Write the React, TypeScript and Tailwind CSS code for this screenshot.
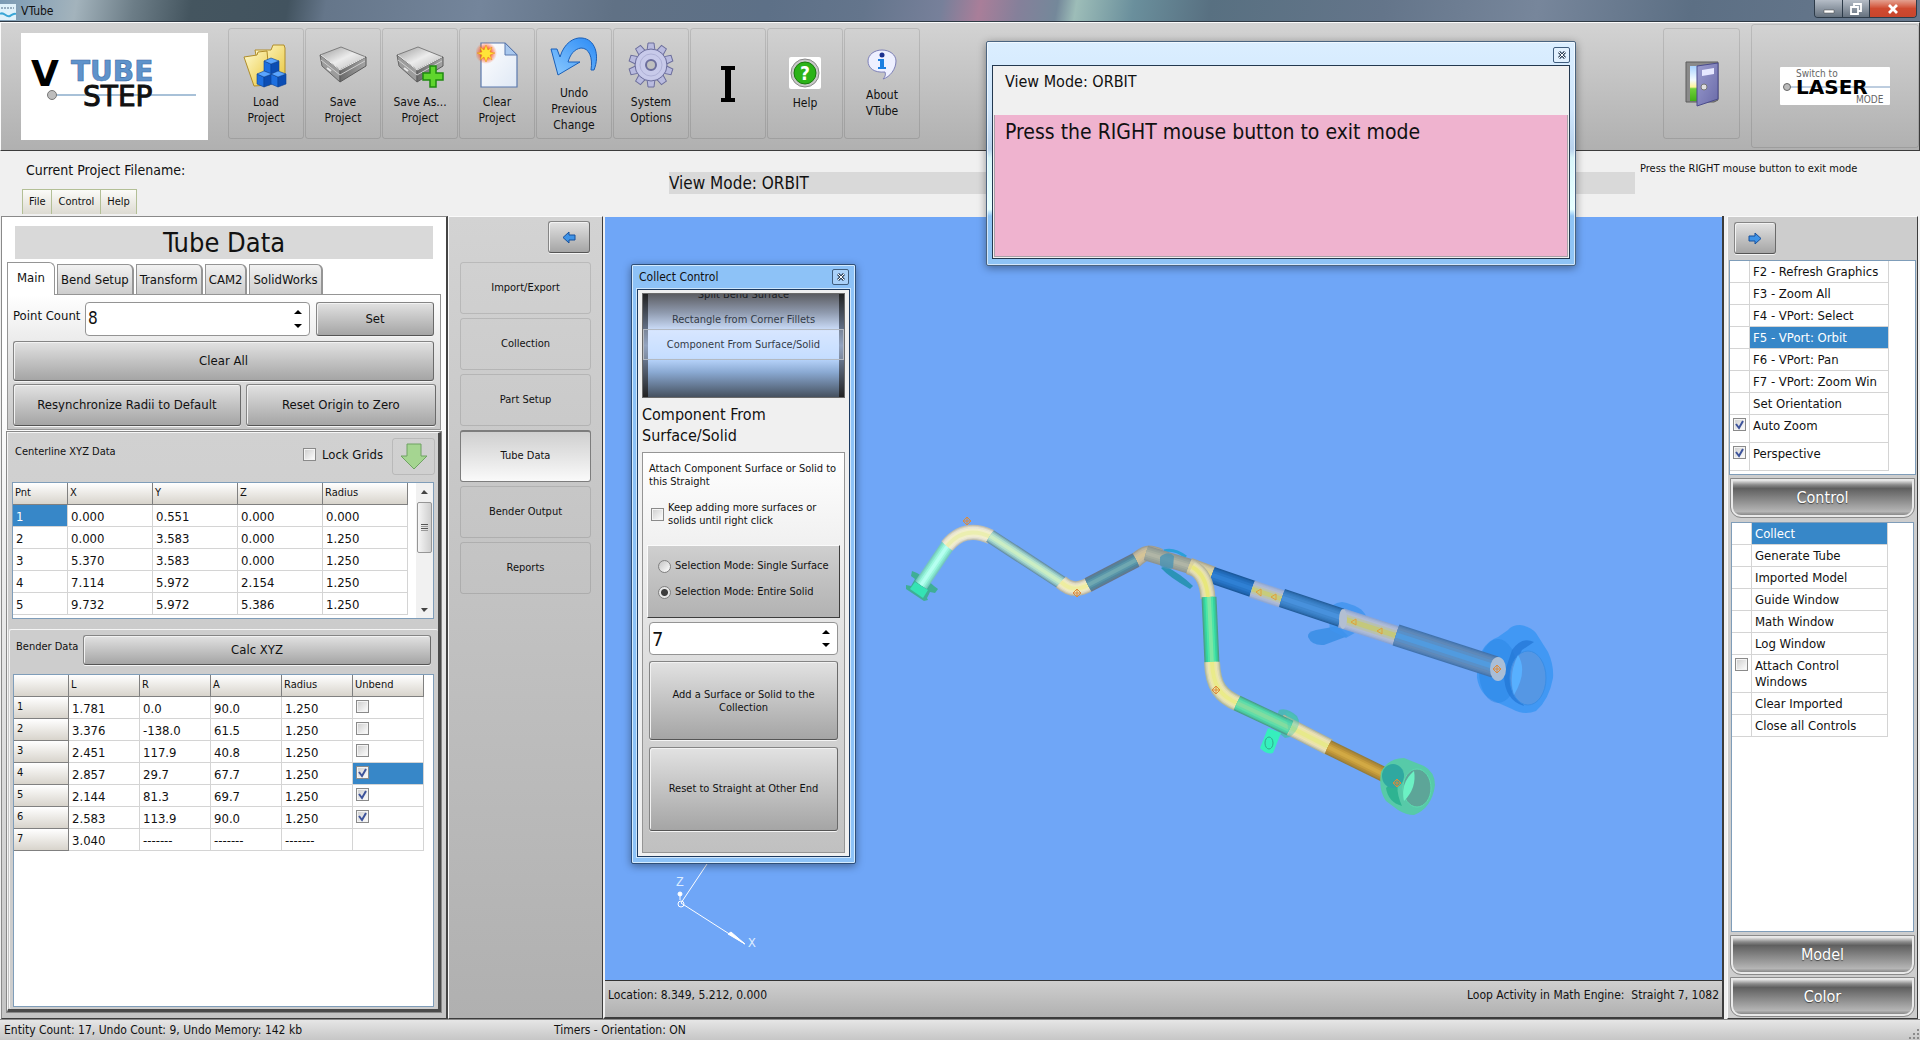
import { useState } from "react";
import type { ReactNode } from "react";

const BUTTON =
  "rounded-[3px] border border-[#858585] border-b-[#555] border-r-[#6a6a6a] bg-linear-to-b from-[#e2e2e2] to-[#a5a5a5] shadow-[inset_1px_1px_0_#f2f2f2,0_1px_0_#f4f4f4]";
const RAISED =
  "border border-t-[#fafafa] border-l-[#fafafa] border-b-[#3c3c3c] border-r-[#3c3c3c]";
const FLAT = "rounded-[3px] border border-[#0000001c]";
const HEAD_CELL =
  "border-r border-b border-[#808080] bg-linear-to-b from-white to-[#d8d4cc] text-left text-[11px] font-normal";
const CELL = "border-r border-b border-[#d4d4d4]";

const XYZ_ROWS = [
  ["1", "0.000", "0.551", "0.000", "0.000"],
  ["2", "0.000", "3.583", "0.000", "1.250"],
  ["3", "5.370", "3.583", "0.000", "1.250"],
  ["4", "7.114", "5.972", "2.154", "1.250"],
  ["5", "9.732", "5.972", "5.386", "1.250"],
];

const BENDER_ROWS = [
  { cells: ["1.781", "0.0", "90.0", "1.250"], unbend: false },
  { cells: ["3.376", "-138.0", "61.5", "1.250"], unbend: false },
  { cells: ["2.451", "117.9", "40.8", "1.250"], unbend: false },
  { cells: ["2.857", "29.7", "67.7", "1.250"], unbend: true },
  { cells: ["2.144", "81.3", "69.7", "1.250"], unbend: true },
  { cells: ["2.583", "113.9", "90.0", "1.250"], unbend: true },
  { cells: ["3.040", "-------", "-------", "-------"], unbend: null },
];

const TABS = ["Bend Setup", "Transform", "CAM2", "SolidWorks"];
const PAGES = ["Import/Export", "Collection", "Part Setup", "Tube Data", "Bender Output", "Reports"];
const VIEW_COMMANDS = [
  "F2 - Refresh Graphics",
  "F3 - Zoom All",
  "F4 - VPort: Select",
  "F5 - VPort: Orbit",
  "F6 - VPort: Pan",
  "F7 - VPort: Zoom Win",
  "Set Orientation",
];
const WINDOW_COMMANDS = ["Collect", "Generate Tube", "Imported Model", "Guide Window", "Math Window", "Log Window"];

/* ---------- icons ---------- */

function FolderIcon() {
  return (
    <svg width="46" height="46" viewBox="0 0 46 46">
      <defs>
        <linearGradient id="folder" x1="0" y1="0" x2="1" y2="1">
          <stop offset="0" stopColor="#fffbd0" />
          <stop offset="1" stopColor="#e9c63c" />
        </linearGradient>
      </defs>
      <path d="M12 8h16l2-5h11l1 3v34H18z" fill="url(#folder)" stroke="#b08d2a" />
      <path d="M1 15l13-2 1-3 9-1 3 34-16 1z" fill="url(#folder)" stroke="#b08d2a" />
      {[
        [28, 16],
        [21, 29],
        [35, 29],
      ].map(([x, y]) => (
        <g key={x} stroke="#0a3f94" strokeWidth="0.6">
          <path d={`M${x - 7} ${y + 3}l7 3v10l-7-3z`} fill="#1d6fe0" />
          <path d={`M${x} ${y + 6}l8-3v10l-8 3z`} fill="#0b4db4" />
          <path d={`M${x - 7} ${y + 3}l7-3 8 3-8 3z`} fill="#5aa5ff" />
        </g>
      ))}
    </svg>
  );
}

function DriveIcon({ plus = false }: { plus?: boolean }) {
  return (
    <svg width="48" height="46" viewBox="0 -4 48 46">
      <defs>
        <linearGradient id="driveTop" x1="0" y1="0" x2="1" y2="1">
          <stop offset="0" stopColor="#9a9a9a" />
          <stop offset="0.5" stopColor="#ececec" />
          <stop offset="1" stopColor="#b5b5b5" />
        </linearGradient>
        <linearGradient id="driveSide" x1="0" y1="0" x2="1" y2="0">
          <stop offset="0" stopColor="#6a6a6a" />
          <stop offset="1" stopColor="#a5a5a5" />
        </linearGradient>
      </defs>
      <path d="M1 9L22 1l25 10-26 13z" fill="url(#driveTop)" stroke="#7d7d7d" />
      <path d="M1 9l20 15v12L3 20z" fill="#9c9c9c" stroke="#666" />
      <path d="M21 24l26-13v9L21 36z" fill="url(#driveSide)" stroke="#5a5a5a" />
      <path d="M2 14l19 15 25-14" fill="none" stroke="#d0d0d0" />
      <path d="M2 9l19 15 25-13" fill="none" stroke="#e8e8e8" />
      <path d="M8 22l4 3" stroke="#e8e8e8" strokeWidth="2" />
      {plus && (
        <path d="M34 20h6v7h7v7h-7v7h-6v-7h-7v-7h7z" fill="#5fd52d" stroke="#1f8a10" strokeWidth="1.5" />
      )}
    </svg>
  );
}

function NewPageIcon() {
  return (
    <svg width="42" height="46" viewBox="0 0 42 46">
      <defs>
        <radialGradient id="burst">
          <stop offset="0.3" stopColor="#ff4a14" />
          <stop offset="1" stopColor="#ff4a14" stopOpacity="0" />
        </radialGradient>
        <linearGradient id="sheet" x1="0" y1="0" x2="1" y2="1">
          <stop offset="0" stopColor="#ffffff" />
          <stop offset="1" stopColor="#dfe8f5" />
        </linearGradient>
      </defs>
      <path d="M5 1h24l12 12v32H5z" fill="url(#sheet)" stroke="#5b79ad" strokeWidth="1.2" />
      <path d="M29 1v12h12z" fill="#a9c8ee" stroke="#5b79ad" />
      <circle cx="10" cy="11" r="11" fill="url(#burst)" />
      <path
        d="M10 3l2 5 4-3-2 5 5 1-5 2 2 5-4-3-2 5-2-5-4 3 2-5-5-2 5-1-2-5 4 3z"
        fill="#ffe438"
        stroke="#e88a10"
        strokeWidth="0.5"
      />
    </svg>
  );
}

function UndoIcon() {
  return (
    <svg width="48" height="44" viewBox="0 -2 48 44">
      <defs>
        <linearGradient id="undo" x1="0" y1="1" x2="1" y2="0">
          <stop offset="0" stopColor="#8ecbff" />
          <stop offset="1" stopColor="#2a8af5" />
        </linearGradient>
      </defs>
      <path
        d="M1 12l6 0 3 8C14 6 24 0 32 1c13 1 18 17 12 32h-3C43 20 39 11 31 11c-7 1-11 7-13 14h12L8 38z"
        fill="url(#undo)"
        stroke="#1a5fb8"
        strokeLinejoin="round"
      />
    </svg>
  );
}

function GearIcon() {
  const teeth = [0, 36, 72, 108, 144, 180, 216, 252, 288, 324];
  return (
    <svg width="46" height="46" viewBox="0 0 46 46">
      <g fill="#b9bbdf" stroke="#6c6e9c">
        {teeth.map((angle) => (
          <path key={angle} d="M19 9l1-8h6l1 8z" transform={`rotate(${angle} 23 23)`} />
        ))}
        <circle cx="23" cy="23" r="16" />
      </g>
      <circle cx="23" cy="23" r="15" fill="#c8caea" />
      <circle cx="23" cy="23" r="11" fill="none" stroke="#afb1d6" />
      <circle cx="23" cy="23" r="5" fill="#bfbfbf" stroke="#6c6e9c" strokeWidth="2" />
    </svg>
  );
}

function CursorIcon() {
  return (
    <svg width="16" height="36" viewBox="0 0 16 36">
      <path d="M1 0h14v4h-4v28h4v4H1v-4h4V4H1z" fill="#000" />
    </svg>
  );
}

function HelpIcon() {
  return (
    <svg width="32" height="32" viewBox="0 0 32 32">
      <rect width="32" height="32" rx="2" fill="#fff" />
      <circle cx="16" cy="16" r="14" fill="#c9c9c9" stroke="#888" />
      <circle cx="16" cy="16" r="11" fill="#2bb318" stroke="#187a0c" />
      <text x="16" y="23" textAnchor="middle" fontSize="19" fontWeight="700" fill="#fff">
        ?
      </text>
    </svg>
  );
}

function AboutIcon() {
  return (
    <svg width="30" height="32" viewBox="0 0 30 32">
      <path
        d="M15 1c8 0 14 5 14 11 0 8-6 16-13 18 2-2 3-4 2-7C7 24 1 19 1 12 1 6 7 1 15 1z"
        fill="#eef0ff"
        stroke="#7d80b8"
      />
      <circle cx="15" cy="6" r="2.500" fill="#1b2f8f" />
      <path d="M11 10h6v8h2v2h-8v-2h2v-6h-2z" fill="#1c7fe0" />
    </svg>
  );
}

function DoorIcon() {
  return (
    <svg width="34" height="46" viewBox="0 0 34 46">
      <defs>
        <linearGradient id="outside" x1="0" y1="0" x2="0" y2="1">
          <stop offset="0" stopColor="#a9d3ff" />
          <stop offset="0.4" stopColor="#f4fbff" />
          <stop offset="0.6" stopColor="#fff59a" />
          <stop offset="0.65" stopColor="#6fd03a" />
          <stop offset="1" stopColor="#43b018" />
        </linearGradient>
        <linearGradient id="leaf" x1="0" y1="0" x2="1" y2="1">
          <stop offset="0" stopColor="#9c9dd0" />
          <stop offset="1" stopColor="#6a6ba8" />
        </linearGradient>
      </defs>
      <path d="M1 1h32v38l-4 2H1z" fill="#8a8a8a" stroke="#5c5c5c" />
      <path d="M5 5h8v35H5z" fill="url(#outside)" />
      <path d="M12 5l21-3v36l-21 7z" fill="url(#leaf)" stroke="#4a4b8c" />
      <path d="M17 9l12-2v6l-12 2z" fill="#e6e8ff" />
      <circle cx="19" cy="26" r="3" fill="#e0e0e0" stroke="#777" />
    </svg>
  );
}

function ArrowIcon({ className = "" }: { className?: string }) {
  return (
    <svg width="14" height="13" viewBox="0 0 14 13" className={className}>
      <path d="M1 4h6V1l6 5.500L7 12V9H1z" fill="#3f93e6" stroke="#17509c" />
    </svg>
  );
}

function DownArrowIcon() {
  return (
    <svg width="28" height="27" viewBox="0 0 28 27">
      <path d="M7 1h14v12h6L14 26 1 13h6z" fill="#a5d591" stroke="#6fa263" />
    </svg>
  );
}

function StepLogo() {
  return (
    <svg width="187" height="107" viewBox="0 0 187 107" className="font-['DejaVu_Sans',sans-serif]">
      <rect width="187" height="107" fill="#fff" />
      <path d="M34 62h141" stroke="#a8c1d8" strokeWidth="2" />
      <text x="10" y="53" fontSize="36" fontWeight="700" fill="#000">
        V
      </text>
      <text x="50" y="48" fontSize="28" fontWeight="700" fill="#5f93cb" stroke="#3d6ca5" strokeWidth="0.6">
        TUBE
      </text>
      <text x="62" y="73" fontSize="28" fill="#111" stroke="#111">
        STEP
      </text>
      <circle cx="31" cy="62" r="4.500" fill="#bdbdbd" stroke="#777" />
    </svg>
  );
}

function LaserLogo() {
  return (
    <svg width="110" height="38" viewBox="0 0 110 38">
      <rect width="110" height="38" rx="1" fill="#fff" />
      <path d="M8 20h102" stroke="#7d9cc0" />
      <circle cx="7" cy="20" r="3.500" fill="#bbb" stroke="#666" />
      <text x="16" y="10" fontSize="10" fill="#666">
        Switch to
      </text>
      <text x="16" y="27" fontSize="20" fontWeight="700" fill="#000" className="font-['DejaVu_Sans',sans-serif]">
        LASER
      </text>
      <text x="76" y="36" fontSize="10" fill="#666">
        MODE
      </text>
    </svg>
  );
}

/* ---------- shared controls ---------- */

function CheckBox({ id, label, checked = false }: { id: string; label?: string; checked?: boolean }) {
  const [on, setOn] = useState(checked);
  return (
    <span className="relative block size-[13px] shrink-0">
      <input
        id={id}
        type="checkbox"
        aria-label={label}
        checked={on}
        onChange={(e) => setOn(e.target.checked)}
        className="block size-[13px] appearance-none border border-[#8a8a8a] bg-linear-to-br from-[#cdcdcd] to-white shadow-[inset_0_0_0_1px_#f4f4f4]"
      />
      {on && (
        <svg viewBox="0 0 13 13" className="pointer-events-none absolute inset-0">
          <path d="M3 6l3 4 4-7" fill="none" stroke="#3d539b" strokeWidth="2" />
        </svg>
      )}
    </span>
  );
}

function Spinner({ id, label, initial, className }: { id: string; label?: string; initial: number; className: string }) {
  const [value, setValue] = useState(initial);
  return (
    <div className={`flex rounded-[4px] border border-[#949494] bg-white ${className}`}>
      <input
        id={id}
        aria-label={label}
        value={value}
        onChange={(e) => setValue(Number(e.target.value) || 0)}
        className="w-full min-w-0 flex-1 bg-transparent px-[2px] outline-none"
      />
      <div className="flex w-[22px] flex-col justify-between py-[7px]">
        <button aria-label="Increase" className="flex justify-center" onClick={() => setValue(value + 1)}>
          <svg width="8" height="4" viewBox="0 0 8 4">
            <path d="M0 4l4-4 4 4z" />
          </svg>
        </button>
        <button aria-label="Decrease" className="flex justify-center" onClick={() => setValue(value - 1)}>
          <svg width="8" height="4" viewBox="0 0 8 4">
            <path d="M0 0l4 4 4-4z" />
          </svg>
        </button>
      </div>
    </div>
  );
}

function ToolButton({ icon, children }: { icon: ReactNode; children?: ReactNode }) {
  return (
    <button className={`flex h-[111px] w-[76px] flex-col items-center justify-center gap-[6px] text-[12px] leading-[16px] ${FLAT}`}>
      {icon}
      {children && <span>{children}</span>}
    </button>
  );
}

function CloseButton({ className }: { className: string }) {
  return (
    <button
      aria-label="Close"
      className={`flex h-[16px] w-[17px] items-center justify-center rounded-[2px] border border-[#3f5d7e] bg-[#ffffff40] ${className}`}
    >
      <svg width="8" height="8" viewBox="0 0 8 8">
        <path d="M1 1l6 6M7 1L1 7" stroke="#33475e" strokeWidth="3" />
        <path d="M1 1l6 6M7 1L1 7" stroke="#fff" />
      </svg>
    </button>
  );
}

/* ---------- page sections ---------- */

function TitleBar() {
  return (
    <header className="flex h-[22px] items-start justify-between border-b border-[#2f3a45] bg-[linear-gradient(100deg,#7a9ab4_0%,#a3b3bc_4%,#6c7d87_7%,#44555f_10%,#42535f_15%,#65768a_17%,#74859b_25%,#607185_32%,#5d7087_40%,#64758c_45%,#77809a_49%,#a97e99_51%,#85809a_53%,#74889a_55%,#9dbdb8_56%,#6a8f9c_59%,#587081_63%,#64758a_72%,#77869b_80%,#5c6f84_88%,#68798e_100%)]">
      <div className="flex items-center gap-[5px]">
        <svg width="16" height="16" viewBox="0 0 16 16" className="mt-[3px]">
          <rect width="16" height="16" fill="#dff1fa" />
          <path d="M1 4h13" stroke="#4f6b85" strokeDasharray="2 1" />
          <path d="M0 10c4-3 6 4 10 2s4-3 6-2" fill="none" stroke="#39a6d6" strokeWidth="2" />
        </svg>
        <h1 className="mt-[2px] text-[12px] leading-[18px]">VTube</h1>
      </div>
      <div className="mr-[3px] flex h-[18px] overflow-hidden rounded-b-[4px] border border-t-0 border-[#2d3b49] text-white">
        <button aria-label="Minimize" className="flex w-[28px] items-center justify-center border-r border-[#2d3b49] bg-linear-to-b from-[#b5bdc7] to-[#66727f]">
          <svg width="12" height="10" viewBox="0 0 12 10">
            <path d="M1 6h10v3H1z" fill="#fff" stroke="#444" strokeWidth="0.500" />
          </svg>
        </button>
        <button aria-label="Restore" className="flex w-[27px] items-center justify-center border-r border-[#2d3b49] bg-linear-to-b from-[#b5bdc7] to-[#66727f]">
          <svg width="12" height="12" viewBox="0 0 12 12">
            <path d="M4 4V1h7v7H8M1 4h7v7H1z" fill="none" stroke="#fff" strokeWidth="1.800" />
          </svg>
        </button>
        <button aria-label="Close" className="flex w-[46px] items-center justify-center bg-linear-to-b from-[#e3a090] via-[#cf4a30] to-[#c8452c]">
          <svg width="12" height="10" viewBox="0 0 12 10">
            <path d="M2 1l8 8M10 1L2 9" stroke="#fff" strokeWidth="2.800" />
          </svg>
        </button>
      </div>
    </header>
  );
}

function Toolbar() {
  return (
    <div className={`flex h-[129px] items-start justify-between bg-linear-to-b from-[#d3d3d3] to-[#b0b0b0] ${RAISED}`}>
      <div className="flex items-start">
        <div className="mt-[10px] mr-[20px] ml-[20px]">
          <StepLogo />
        </div>
        <div className="mt-[5px] flex gap-px">
          <ToolButton icon={<FolderIcon />}>Load<br />Project</ToolButton>
          <ToolButton icon={<DriveIcon />}>Save<br />Project</ToolButton>
          <ToolButton icon={<DriveIcon plus />}>Save As...<br />Project</ToolButton>
          <ToolButton icon={<NewPageIcon />}>Clear<br />Project</ToolButton>
          <ToolButton icon={<UndoIcon />}>Undo<br />Previous<br />Change</ToolButton>
          <ToolButton icon={<GearIcon />}>System<br />Options</ToolButton>
          <ToolButton icon={<CursorIcon />} />
          <ToolButton icon={<HelpIcon />}>Help</ToolButton>
          <ToolButton icon={<AboutIcon />}>About<br />VTube</ToolButton>
        </div>
      </div>
      <div className="flex items-start gap-[11px]">
        <button aria-label="Exit" className={`mt-[5px] flex h-[111px] w-[77px] items-center justify-center ${FLAT}`}>
          <DoorIcon />
        </button>
        <button aria-label="Switch to Laser mode" className={`mt-[1px] flex h-[124px] w-[168px] items-center justify-center ${FLAT}`}>
          <LaserLogo />
        </button>
      </div>
    </div>
  );
}

function InfoBar() {
  return (
    <div className="flex h-[65px] bg-[#f0f0f0]">
      <div className="flex w-[669px] shrink-0 flex-col justify-between pb-[2px]">
        <p className="mt-[9px] ml-[26px] text-[14px] leading-[20px]">Current Project Filename:</p>
        <nav className="ml-[22px] flex text-[11px]">
          {["File", "Control", "Help"].map((item) => (
            <button
              key={item}
              className="-mr-px h-[25px] border border-b-0 border-[#b3bf96] bg-linear-to-b from-[#fbfbf8] to-[#dddbd2] px-[6px]"
            >
              {item}
            </button>
          ))}
        </nav>
      </div>
      <p className="mt-[21px] h-[22px] flex-1 bg-[#d9d9d9] text-[17px] leading-[22px]">View Mode: ORBIT</p>
      <p className="mt-[10px] w-[285px] pl-[5px] text-[11px] leading-[16px]">Press the RIGHT mouse button to exit mode</p>
    </div>
  );
}

function MainTab() {
  return (
    <section className="mx-[5px] mt-[-1px] border border-[#959595] bg-linear-to-b from-white to-[#c6c6c6] pt-[7px] pr-[4px] pb-[3px] pl-[5px] text-[13px]">
      <div className="flex h-[34px]">
        <label htmlFor="point-count" className="w-[72px] shrink-0 pt-[4px]">Point Count</label>
        <Spinner id="point-count" initial={8} className="mr-[6px] flex-1 text-[17px]" />
        <button className={`mr-[2px] w-[118px] ${BUTTON}`}>Set</button>
      </div>
      <div className="mt-[5px] mr-[2px] flex h-[40px]">
        <button className={`flex-1 ${BUTTON}`}>Clear All</button>
      </div>
      <div className="mt-[3px] flex h-[42px] gap-[5px]">
        <button className={`flex-6 ${BUTTON}`}>Resynchronize Radii to Default</button>
        <button className={`flex-5 ${BUTTON}`}>Reset Origin to Zero</button>
      </div>
    </section>
  );
}

function CenterlineGrid() {
  return (
    <div className="mx-[4px] flex h-[137px] border border-[#7f9db9] bg-white">
      <div className="flex-1 overflow-hidden">
        <table className="w-[395px] table-fixed border-separate border-spacing-0 text-[13px]">
          <thead>
            <tr className="h-[22px]">
              <th className={`w-[55px] px-[2px] ${HEAD_CELL}`}>Pnt</th>
              <th className={`px-[2px] ${HEAD_CELL}`}>X</th>
              <th className={`px-[2px] ${HEAD_CELL}`}>Y</th>
              <th className={`px-[2px] ${HEAD_CELL}`}>Z</th>
              <th className={`px-[2px] ${HEAD_CELL}`}>Radius</th>
            </tr>
          </thead>
          <tbody>
            {XYZ_ROWS.map((row, r) => (
              <tr key={row[0]} className="h-[22px]">
                {row.map((cell, c) => (
                  <td key={c} className={`px-[3px] pt-[2px] leading-[18px] ${CELL} ${r === 0 && c === 0 ? "bg-[#3787c8] text-white" : ""}`}>
                    {cell}
                  </td>
                ))}
              </tr>
            ))}
          </tbody>
        </table>
      </div>
      <div className="flex w-[17px] flex-col items-center bg-[#f1f1f1] pb-[6px]">
        <svg width="7" height="4" viewBox="0 0 7 4" className="mt-[7px] mb-[8px]">
          <path d="M0 4l3-4 4 4z" fill="#444" />
        </svg>
        <div className="flex h-[51px] w-[15px] flex-col items-center justify-center gap-px rounded-[2px] border border-[#969696] bg-linear-to-r from-[#f5f5f5] to-[#cfcfcf]">
          <span className="h-px w-[7px] bg-[#555]" />
          <span className="h-px w-[7px] bg-[#999]" />
          <span className="h-px w-[7px] bg-[#555]" />
          <span className="h-px w-[7px] bg-[#999]" />
        </div>
        <svg width="7" height="4" viewBox="0 0 7 4" className="mt-auto">
          <path d="M0 0l3 4 4-4z" fill="#444" />
        </svg>
      </div>
    </div>
  );
}

function BenderGrid() {
  return (
    <div className="mt-[9px] mr-[4px] mb-[2px] ml-[3px] flex-1 border border-[#7f9db9] bg-white">
      <table className="w-[410px] table-fixed border-separate border-spacing-0 text-[13px]">
        <thead>
          <tr className="h-[22px]">
            <th className={`w-[55px] ${HEAD_CELL}`} aria-label="Row" />
            {["L", "R", "A", "Radius", "Unbend"].map((head) => (
              <th key={head} className={`px-[2px] ${HEAD_CELL}`}>{head}</th>
            ))}
          </tr>
        </thead>
        <tbody>
          {BENDER_ROWS.map((row, r) => (
            <tr key={r} className="h-[22px]">
              <th className={`px-[3px] ${HEAD_CELL}`}>{r + 1}</th>
              {row.cells.map((cell, c) => (
                <td key={c} className={`px-[3px] pt-[2px] leading-[18px] ${CELL}`}>{cell}</td>
              ))}
              <td className={`px-[3px] pb-[2px] ${CELL} ${r === 3 ? "bg-[#3787c8]" : ""}`}>
                {row.unbend !== null && <CheckBox id={`unbend-${r}`} label={`Unbend ${r + 1}`} checked={row.unbend} />}
              </td>
            </tr>
          ))}
        </tbody>
      </table>
    </div>
  );
}

function TubeDataPanel() {
  return (
    <section className="flex w-[447px] shrink-0 flex-col border border-[#8a8a8a] border-r-2 border-r-[#444] border-b-[#3c3c3c] bg-linear-to-b from-white from-20% to-[#c4c4c4] pb-[6px]">
      <h2 className="mx-[13px] mt-[9px] h-[33px] bg-[#d9d9d9] text-center text-[27px] leading-[33px]">Tube Data</h2>
      <div className="ml-[5px] mt-[3px] flex items-end gap-[2px] text-[13px]">
        <button className="relative z-10 h-[33px] rounded-tr-[6px] border border-b-0 border-[#959595] bg-white px-[9px] pb-[3px]">Main</button>
        {TABS.map((tab) => (
          <button key={tab} className="h-[31px] rounded-tr-[6px] border border-r-2 border-[#959595] bg-linear-to-b from-[#f2f2f2] to-[#cdcdcd] px-[3px]">
            {tab}
          </button>
        ))}
      </div>
      <MainTab />
      <section className="mx-[5px] mt-[2px] flex flex-1 flex-col border border-[#f5f5f5] border-r-[3px] border-b-[3px] border-r-[#4a4a4a] border-b-[#4a4a4a] bg-linear-to-b from-[#d1d1d1] to-[#c2c2c2] outline outline-[#888]">
        <div className="flex h-[49px] items-start px-[7px] pt-[5px]">
          <h3 className="mt-[6px] flex-1 text-[11px] leading-[16px]">Centerline XYZ Data</h3>
          <div className="mr-[9px] flex h-[33px] items-center gap-[6px] text-[13px]">
            <CheckBox id="lock-grids" />
            <label htmlFor="lock-grids">Lock Grids</label>
          </div>
          <button aria-label="Apply" className={`-mr-[4px] flex h-[37px] w-[43px] items-center justify-center ${FLAT}`}>
            <DownArrowIcon />
          </button>
        </div>
        <CenterlineGrid />
        <section className="mt-[10px] ml-[1px] flex flex-1 flex-col rounded-[2px] border-t border-l border-[#f5f5f5] bg-[#cdcdcd]">
          <div className="mt-[5px] flex h-[30px] pr-[7px] pl-[6px]">
            <h3 className="w-[67px] pt-[4px] text-[11px] leading-[16px]">Bender Data</h3>
            <button className={`flex-1 text-[13px] ${BUTTON}`}>Calc XYZ</button>
          </div>
          <BenderGrid />
        </section>
      </section>
    </section>
  );
}

function PageNav() {
  return (
    <nav className={`flex w-[155px] shrink-0 flex-col items-center bg-linear-to-b from-[#d3d3d3] to-[#b0b0b0] text-[11px] ${RAISED}`}>
      <button aria-label="Collapse" className={`mt-[4px] mr-[12px] mb-[9px] flex h-[32px] w-[42px] items-center justify-center self-end ${BUTTON}`}>
        <ArrowIcon className="rotate-180" />
      </button>
      <div className="flex flex-col gap-[4px]">
        {PAGES.map((page) =>
          page === "Tube Data" ? (
            <button key={page} className="h-[52px] w-[131px] rounded-[3px] border border-t-2 border-[#7d7d7d] bg-linear-to-b from-[#cfcfcf] to-[#fafafa]">
              {page}
            </button>
          ) : (
            <button key={page} className={`h-[52px] w-[131px] ${FLAT}`}>{page}</button>
          )
        )}
      </div>
    </nav>
  );
}

// Stacked strokes of falling width, so each run reads as a lit cylinder.
function Tube({ d, width, edge, body, shine }: { d: string; width: number; edge: string; body: string; shine: string }) {
  return (
    <g fill="none" strokeLinejoin="round">
      <path d={d} stroke={edge} strokeWidth={width} />
      <path d={d} stroke={body} strokeWidth={width - 2} opacity="0.4" />
      <path d={d} stroke={body} strokeWidth={width - 4} opacity="0.6" />
      <path d={d} stroke={body} strokeWidth={width - 7} />
      <path d={d} stroke={shine} strokeWidth={width / 2} opacity="0.4" />
      <path d={d} stroke={shine} strokeWidth={width / 4} />
    </g>
  );
}

function Target({ x, y }: { x: number; y: number }) {
  return (
    <path d={`M${x - 4} ${y}l4-4 4 4-4 4zM${x - 4} ${y}h8M${x} ${y - 4}v8`} fill="none" stroke="#dd8a3a" />
  );
}

function TubeModel() {
  return (
    <svg viewBox="605 217 1117 763" className="absolute inset-0 h-full w-full" aria-label="Tube model">
      {/* upper run */}
      <path d="M912 571l5 2 8 5 9 8 4 3-3 4-5-1-3 6 1 2-4 1-18-12 0-4 5 1 4-7-4-3z" fill="#3fae96" />
      <path d="M915 582l13 8-5 8-13-9z" fill="#35e3b4" />
      <Tube d="M921 585L948 545" width={14} edge="#74c6bd" body="#8ef2d4" shine="#b5fff0" />
      <Tube d="M947 546C958 533 972 528 991 537" width={15} edge="#bcbcb0" body="#f5f0dc" shine="#ebeeb0" />
      <Tube d="M990 536L1062 583" width={14} edge="#668fa5" body="#a3d9d0" shine="#cbeec4" />
      <Tube d="M1061 582C1071 591 1079 590 1090 584" width={15} edge="#b5b3a0" body="#efe9cf" shine="#eeeda0" />
      <Tube d="M1135 561C1145 552 1149 551 1160 556" width={15} edge="#9f9d91" body="#c9bda0" shine="#d5c497" />
      <Tube d="M1088 585L1136 560" width={15} edge="#65768b" body="#4c8ba4" shine="#70a8b1" />
      <path d="M1164 551q10-3 22 6" fill="none" stroke="#2aa0d8" strokeWidth="3" />
      <path d="M1161 568q8 9 29 21l3-3q-12-12-28-20z" fill="#2b93b7" />
      <Tube d="M1146 553L1192 567" width={15} edge="#8c9391" body="#9da79c" shine="#b0b5a6" />
      <path d="M1160 557q8-7 14-1l-1 12q-8 3-13-3z" fill="#4a93b4" opacity="0.8" />
      {/* main line */}
      <Tube d="M1189 566L1213 575" width={17} edge="#a9a590" body="#d4cda9" shine="#e2d891" />
      <Tube d="M1212 575L1253 589" width={17} edge="#1b589b" body="#2470c0" shine="#2f80d4" />
      <Tube d="M1252 589L1282 599" width={18} edge="#8fa8d4" body="#b1bcd6" shine="#c7cc7c" />
      <path d="M1308 637q-1-5 8-7l22-4 10 10-24 9q-12 1-16-8z" fill="#3b8fe6" opacity="0.9" />
      <path d="M1328 612q3-9 14-10 20 4 24 14l-6 14-14 8-16-8z" fill="#3f93ee" opacity="0.8" />
      <Tube d="M1282 598L1342 618" width={19} edge="#255f9d" body="#397fc5" shine="#4891dc" />
      <Tube d="M1341 618L1397 636" width={20} edge="#8ba5d4" body="#b1bcd6" shine="#c4c87b" />
      <ellipse cx="1343" cy="619" rx="4" ry="10" fill="#b3bfd2" />
      <path
        d="M1498 637L1508 630Q1512 625 1520 625Q1530 626 1536 633L1548 652Q1554 665 1553 678Q1549 700 1536 711Q1524 716 1512 709L1494 701Q1480 695 1477 678Q1476 645 1498 637Z"
        fill="#3c97f3"
        opacity="0.9"
      />
      <ellipse cx="1498" cy="671" rx="19" ry="32" fill="#2a86e4" opacity="0.5" />
      <path d="M1512 650q10-14 22-8l-12 8q-12 22 2 56-20-6-20-32z" fill="#2275d4" opacity="0.7" />
      <ellipse cx="1528" cy="678" rx="18" ry="27" fill="#5597e4" stroke="#3a8ee6" />
      <path d="M1518 655q10 16-4 40-6-20 4-40z" fill="#58b0ff" />
      <Tube d="M1396 635L1495 667" width={22} edge="#4273ad" body="#5f89b9" shine="#519bdf" />
      <ellipse cx="1498" cy="669" rx="8" ry="12" fill="#aabed6" />
      <path d="M1256 592l5-3v7zM1271 597l5-3v6zM1351 622l5-3v6zM1377 631l5-3v6z" fill="none" stroke="#e0a03c" />
      <Target x={1497} y={669} />
      {/* lower branch */}
      <Tube d="M1192 567Q1207 575 1208 599" width={15} edge="#b3b399" body="#e9e3bd" shine="#e8e77c" />
      <Tube d="M1209 597L1212 664" width={15} edge="#4c9e82" body="#2ee3a8" shine="#7de7a4" />
      <Tube d="M1212 662C1213 686 1220 696 1239 704" width={16} edge="#aeb69b" body="#ece6ba" shine="#eaeb8a" />
      <path d="M1279 710q8-3 18 6 5 8-2 20l-10 2-12-10z" fill="#3fbf9f" opacity="0.7" />
      <Tube d="M1280 722L1329 747" width={17} edge="#a9af9c" body="#eee3b9" shine="#e7e98b" />
      <Tube d="M1237 703L1290 728" width={16} edge="#489f89" body="#50ddad" shine="#83dca0" />
      <path d="M1286 712q12 2 13 12-3 10-10 13z" fill="#48cdae" opacity="0.4" />
      <path d="M1268 728l13 5-8 20q-7 2-13-5z" fill="#36efbd" />
      <ellipse cx="1269" cy="743" rx="4" ry="6" fill="none" stroke="#2fa98a" />
      <Tube d="M1328 747L1385 775" width={15} edge="#947c3c" body="#bd9338" shine="#d2a944" />
      <path
        d="M1381 772Q1388 758 1404 758L1424 766Q1435 772 1435 785Q1432 808 1414 815Q1406 815 1398 810L1386 801Q1378 790 1381 772Z"
        fill="#55cba3"
        opacity="0.95"
      />
      <path d="M1404 770q-12 14-2 36-14-4-16-18z" fill="#2eb391" />
      <ellipse cx="1393" cy="776" rx="11" ry="12" fill="#2fa8a0" />
      <ellipse cx="1417" cy="788" rx="14" ry="19" fill="#5da598" stroke="#5cdcb0" />
      <path d="M1414 771q3 17-10 30-4-18 10-30z" fill="#6cf1c4" />
      <Target x={967} y={521} />
      <Target x={1077} y={593} />
      <Target x={1216} y={690} />
      <Target x={1397} y={783} />
      {/* axis triad */}
      <g stroke="#fff" fill="none">
        <path d="M681 903L715 852M681 903L745 944" />
        <circle cx="681" cy="904" r="3" />
        <path d="M680 900v-7" />
        <circle cx="680" cy="894" r="2" fill="#fff" />
        <path d="M728 934l3-2 14 12z" fill="#fff" />
      </g>
      <text x="676" y="886" fontSize="13" fill="#dcecff" className="font-['Liberation_Mono',monospace]">Z</text>
      <text x="748" y="947" fontSize="13" fill="#dcecff" className="font-['Liberation_Mono',monospace]">X</text>
    </svg>
  );
}

function CollectWindow() {
  const [mode, setMode] = useState("solid");
  return (
    <div className="absolute top-[47px] left-[26px] flex h-[600px] w-[225px] flex-col rounded-[2px] border border-[#2f4f78] bg-[#8dc2f7] px-[5px] pb-[6px] text-[11px] shadow-[inset_0_0_0_1px_#d4ebff,0_2px_8px_#0006]">
      <div className="flex h-[24px] items-center">
        <h2 className="flex-1 pl-[2px] text-[12px]">Collect Control</h2>
        <CloseButton className="mr-[1px]" />
      </div>
      <div className="flex flex-1 flex-col border border-[#1d3a5f] bg-[#f0f0f0] px-[4px] pt-[3px] pb-[3px] outline outline-[#cfe6fb]">
        <div className="relative h-[105px] overflow-hidden border border-[#6b6b6b] bg-[linear-gradient(#5c5d62,#8f9aae_18%,#d0e2ff_36%,#bcd8ff_62%,#8aa9d2_76%,#46515f)]">
          <div className="absolute inset-y-0 left-0 w-[5px] bg-[linear-gradient(#222,#8094b5_50%,#222)]" />
          <div className="absolute inset-y-0 right-0 w-[5px] bg-[linear-gradient(#222,#8094b5_50%,#222)]" />
          <div className="absolute inset-x-0 top-[35px] h-[31px] border border-[#b3b9c2] bg-[#ffffff26]" />
          <ul className="relative -mt-[12px] text-center leading-[25px] text-[#333b48]">
            <li className="text-[#1a1c22]">Split Bend Surface</li>
            <li>Rectangle from Corner Fillets</li>
            <li>Component From Surface/Solid</li>
          </ul>
        </div>
        <h3 className="mt-[6px] mb-[6px] text-[16px] leading-[21px]">Component From<br />Surface/Solid</h3>
        <div className="flex flex-1 flex-col border border-[#959595] bg-linear-to-b from-white to-[#c0c0c0] px-[5px] pt-[9px]">
          <p className="h-[26px] overflow-hidden pl-[1px] leading-[13px]">Attach Component Surface or Solid to this Straight</p>
          <div className="mt-[13px] flex items-center gap-[4px] pl-[3px] leading-[13px]">
            <CheckBox id="keep-adding" />
            <label htmlFor="keep-adding">Keep adding more surfaces or<br />solids until right click</label>
          </div>
          <fieldset className={`-mx-[1px] mt-[18px] h-[73px] bg-linear-to-b from-[#cfcfcf] to-[#b2b2b2] ${RAISED}`}>
            <div className="flex flex-col gap-[12px] pt-[13px] pl-[10px] leading-[14px] whitespace-nowrap">
              {[
                ["surface", "Selection Mode: Single Surface"],
                ["solid", "Selection Mode: Entire Solid"],
              ].map(([value, text]) => (
                <label key={value} className="flex items-center gap-[4px]">
                  <input
                    type="radio"
                    name="selection-mode"
                    checked={mode === value}
                    onChange={() => setMode(value)}
                    className="size-[13px] shrink-0 appearance-none rounded-full border border-[#808080] bg-linear-to-br from-[#c4c4c4] to-white checked:bg-[radial-gradient(circle,#3c3c3c_3px,#e6e6e6_4px)]"
                  />
                  {text}
                </label>
              ))}
            </div>
          </fieldset>
          <Spinner id="straight" label="Straight number" initial={7} className="mx-[1px] mt-[4px] h-[33px] text-[20px]" />
          <button className={`mx-[1px] mt-[6px] h-[79px] px-[16px] leading-[13px] ${BUTTON}`}>Add a Surface or Solid to the Collection</button>
          <button className={`mx-[1px] mt-[7px] h-[84px] ${BUTTON}`}>Reset to Straight at Other End</button>
        </div>
      </div>
    </div>
  );
}

function Viewport() {
  return (
    <main className="flex min-w-0 flex-1 flex-col border-x-2 border-b-2 border-l-[#f0f0f0] border-r-[#3c3c3c] border-b-[#3c3c3c] pt-px">
      <div className="relative flex-1 bg-[#6fa6f7]">
        <TubeModel />
        <CollectWindow />
      </div>
      <div className="flex h-[37px] justify-between border-t border-[#333] bg-linear-to-b from-[#cfcfcf] to-[#b0b0b0] px-[3px] pt-[6px] text-[12px] leading-[16px]">
        <p>Location: 8.349, 5.212, 0.000</p>
        <p className="whitespace-pre">Loop Activity in Math Engine:  Straight 7, 1082</p>
      </div>
    </main>
  );
}

function GroupHeader({ children }: { children: ReactNode }) {
  return (
    <button className="h-[38px] shrink-0 rounded-b-[10px] border-2 border-t border-[#e9e9e9] bg-[linear-gradient(#eee,#8a8a8a_14%,#5f5f5f_24%,#b5b5b5_90%,#888)] text-[16px] text-white outline outline-[#8a8a8a] text-shadow-[0_1px_1px_#444]">
      {children}
    </button>
  );
}

function CommandRow({ children, height = "h-[22px]", selected = false, box }: { children: ReactNode; height?: string; selected?: boolean; box?: ReactNode }) {
  return (
    <li className={`flex border-b border-[#d4d4d4] ${height}`}>
      <div className="w-[20px] shrink-0 border-r border-[#d4d4d4] pt-[3px] pl-[3px]">{box}</div>
      <div className={`flex-1 border-r border-[#d4d4d4] pt-[3px] pl-[3px] leading-[16px] whitespace-nowrap ${selected ? "bg-[#3787c8] text-white" : ""}`}>
        {children}
      </div>
    </li>
  );
}

function CommandPanel() {
  return (
    <aside className={`flex w-[191px] shrink-0 flex-col bg-[#cdcdcd] px-px text-[13px] ${RAISED}`}>
      <button aria-label="Expand" className={`mt-[5px] ml-[5px] flex h-[32px] w-[42px] items-center justify-center ${BUTTON}`}>
        <ArrowIcon />
      </button>
      <div className="mt-[6px] border border-[#7f9db9] bg-white pb-[3px]">
        <ul className="w-[159px]">
          {VIEW_COMMANDS.map((name) => (
            <CommandRow key={name} selected={name === "F5 - VPort: Orbit"}>
              <button>{name}</button>
            </CommandRow>
          ))}
          <CommandRow height="h-[28px]" box={<CheckBox id="auto-zoom" checked />}>
            <label htmlFor="auto-zoom">Auto Zoom</label>
          </CommandRow>
          <CommandRow height="h-[28px]" box={<CheckBox id="perspective" checked />}>
            <label htmlFor="perspective">Perspective</label>
          </CommandRow>
        </ul>
      </div>
      <div className="mt-[4px] flex flex-col px-[2px]"><GroupHeader>Control</GroupHeader></div>
      <div className="mx-[2px] mt-[5px] mb-[4px] flex-1 border border-[#7f9db9] bg-white">
        <ul className="w-[156px]">
          {WINDOW_COMMANDS.map((name) => (
            <CommandRow key={name} selected={name === "Collect"}>
              <button>{name}</button>
            </CommandRow>
          ))}
          <CommandRow height="h-[38px]" box={<CheckBox id="attach-windows" />}>
            <label htmlFor="attach-windows">Attach Control<br />Windows</label>
          </CommandRow>
          <CommandRow><button>Clear Imported</button></CommandRow>
          <CommandRow><button>Close all Controls</button></CommandRow>
        </ul>
      </div>
      <div className="flex flex-col gap-[4px] px-[2px] pb-[2px]">
        <GroupHeader>Model</GroupHeader>
        <GroupHeader>Color</GroupHeader>
      </div>
    </aside>
  );
}

function ModeWindow() {
  return (
    <div className="absolute top-[41px] right-[344px] flex h-[225px] w-[590px] flex-col rounded-[2px] border border-[#4a6480] bg-[linear-gradient(#dbeeff,#cfe6fc_30%,#b9d2ec_48%,#d9f6fa_52%,#e6ffff_75%,#8fc4f5_78%)] px-[5px] pb-[6px] shadow-[inset_0_0_0_1px_#ffffff99,0_2px_8px_#0006]">
      <div className="flex h-[23px] items-center justify-end">
        <CloseButton className="mt-[2px]" />
      </div>
      <div className="flex flex-1 flex-col border border-[#23384f] bg-[#f0f0f0]">
        <p className="h-[49px] pt-[5px] pl-[12px] text-[16px] leading-[21px]">View Mode: ORBIT</p>
        <p className="mx-[1px] mb-[1px] flex-1 border border-t-0 border-[#a8a0a8] bg-[#efb3cf] pt-[4px] pl-[10px] text-[21px] leading-[26px]">
          Press the RIGHT mouse button to exit mode
        </p>
      </div>
    </div>
  );
}

export default function App() {
  return (
    <div className="relative flex min-h-screen flex-col bg-[#f0f0f0] font-['DejaVu_Sans_Condensed','DejaVu_Sans',sans-serif] text-[#111]">
      <TitleBar />
      <Toolbar />
      <InfoBar />
      <div className="flex flex-1 pr-[2px] pl-[1px]">
        <TubeDataPanel />
        <PageNav />
        <Viewport />
        <div className="w-[3px] shrink-0" />
        <CommandPanel />
      </div>
      <footer className="flex h-[21px] items-center border-t border-[#8a8a8a] bg-linear-to-b from-[#e6e6e6] to-[#c6c6c6] text-[12px] leading-[18px]">
        <p className="w-[554px] pl-[4px]">Entity Count: 17, Undo Count: 9, Undo Memory: 142 kb</p>
        <p className="flex-1">Timers - Orientation: ON</p>
        <svg width="12" height="12" viewBox="0 0 12 12" className="self-end">
          <path d="M9 1h2v2H9zM9 5h2v2H9zM5 5h2v2H5zM9 9h2v2H9zM5 9h2v2H5zM1 9h2v2H1z" fill="#8a8a8a" />
        </svg>
      </footer>
      <ModeWindow />
    </div>
  );
}
